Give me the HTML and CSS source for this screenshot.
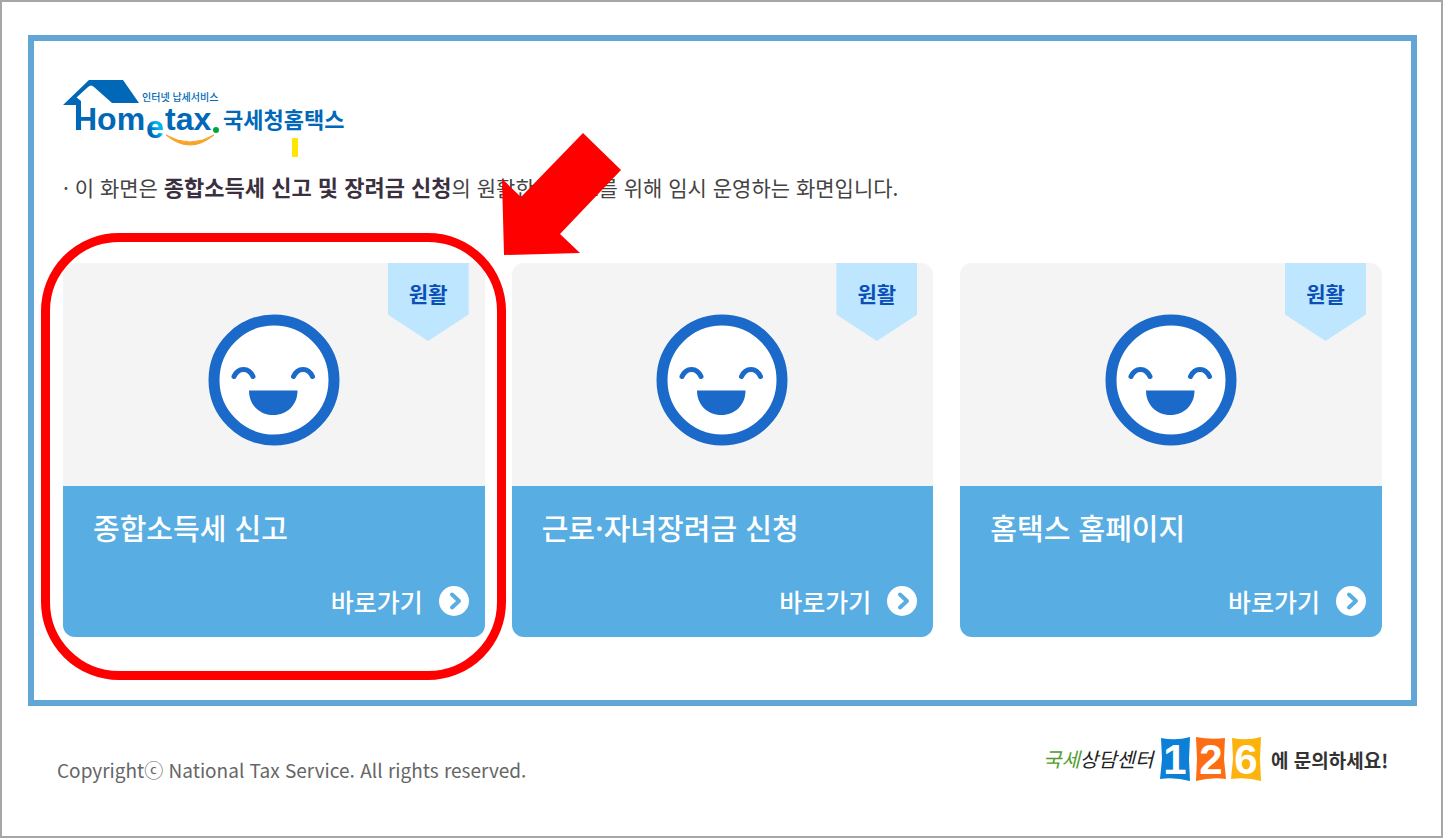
FILE: index.html
```
<!DOCTYPE html>
<html lang="ko">
<head>
    <meta charset="UTF-8">
    <meta name="viewport" content="width=device-width, initial-scale=1.0">
    <title>국세청 홈택스</title>
    <link rel="stylesheet" href="styles.css">
</head>
<body>
    <!-- Icônes partagées -->
    <svg class="defs" width="0" height="0" aria-hidden="true">
        <symbol id="smile" viewBox="0 0 132 132">
            <circle cx="66" cy="66" r="60" fill="#fff" stroke="#1b69c8" stroke-width="11"/>
            <path d="M26 62.500C30 53 41 53 45 62.500M85.500 62.500C89.500 53 100.500 53 104.500 62.500" fill="none" stroke="#1b69c8" stroke-width="5" stroke-linecap="round"/>
            <path d="M41 76.500H89.500C89.500 91 79 101 65.250 101C51.500 101 41 91 41 76.500Z" fill="#1b69c8"/>
        </symbol>
        <symbol id="go" viewBox="0 0 30 30">
            <circle cx="15" cy="15" r="15" fill="#fff"/>
            <path d="M13 8.500L20 15L13 21.500" fill="none" stroke="#58ade3" stroke-width="4" stroke-linecap="round" stroke-linejoin="round"/>
        </symbol>
    </svg>

    <div class="page">
        <main class="panel">
            <h1 class="logo">
                <svg width="284" height="80" viewBox="0 0 284 80" role="img" aria-label="Hometax 국세청홈택스">
                    <defs>
                        <linearGradient id="e-fill" x1="0" y1="1" x2="1" y2="0">
                            <stop offset="0.3" stop-color="#0068b7"/>
                            <stop offset="0.6" stop-color="#00b4f0"/>
                        </linearGradient>
                    </defs>
                    <path d="M0 26L26 1H60L76 24H49L31 8C29 6 27 6 25 8L13 19V26Z" fill="#0068b7"/>
                    <path d="M13 18L18 22V51H13Z" fill="#0068b7"/>
                    <text class="logo-en" x="11" y="51">Hom</text>
                    <text class="logo-e" x="83" y="59">e</text>
                    <text class="logo-en" x="102" y="51">tax</text>
                    <circle cx="153" cy="51" r="3" fill="#00a73c"/>
                    <path d="M103 56Q127 76 151 56Q127 70 103 56Z" fill="#f8a427" stroke="#f8a427" stroke-linejoin="round"/>
                    <text class="logo-sub" x="79" y="22">인터넷 납세서비스</text>
                    <text class="logo-ko" x="160" y="49">국세청홈택스</text>
                    <rect x="229" y="59" width="6" height="19" rx="1" fill="#ffe600"/>
                </svg>
            </h1>

            <p class="notice">· 이 화면은 <strong>종합소득세 신고 및 장려금 신청</strong>의 원활한 서비스를 위해 임시 운영하는 화면입니다.</p>

            <div class="cards">
                <section class="card">
                    <div class="card-top">
                        <svg class="face" aria-hidden="true"><use href="#smile"/></svg>
                        <span class="badge">원활</span>
                    </div>
                    <div class="card-body">
                        <h2>종합소득세 신고</h2>
                        <a href="#" class="go">바로가기 <svg class="go-icon" aria-hidden="true"><use href="#go"/></svg></a>
                    </div>
                    <!-- Repère rouge -->
                    <div class="marker"></div>
                    <svg class="arrow" width="120" height="124" viewBox="0 0 120 124" aria-hidden="true">
                        <path d="M81 0L119 37L58 101L78 120L2 122L0 46L19 64Z" fill="#f00"/>
                    </svg>
                </section>

                <section class="card">
                    <div class="card-top">
                        <svg class="face" aria-hidden="true"><use href="#smile"/></svg>
                        <span class="badge">원활</span>
                    </div>
                    <div class="card-body">
                        <h2>근로·자녀장려금 신청</h2>
                        <a href="#" class="go">바로가기 <svg class="go-icon" aria-hidden="true"><use href="#go"/></svg></a>
                    </div>
                </section>

                <section class="card">
                    <div class="card-top">
                        <svg class="face" aria-hidden="true"><use href="#smile"/></svg>
                        <span class="badge">원활</span>
                    </div>
                    <div class="card-body">
                        <h2>홈택스 홈페이지</h2>
                        <a href="#" class="go">바로가기 <svg class="go-icon" aria-hidden="true"><use href="#go"/></svg></a>
                    </div>
                </section>
            </div>
        </main>

        <footer class="footer">
            <p class="copyright">Copyrightⓒ National Tax Service. All rights reserved.</p>
            <svg width="350" height="50" viewBox="0 0 350 50" role="img" aria-label="국세상담센터 126에 문의하세요!">
                <text class="call-name" x="0" y="32"><tspan fill="#4f9e2f">국세</tspan>상담센터</text>
                <path d="M118 3Q133 6 147 2L146 24L147 46Q132 42 117 44L119 24Z" fill="#0b80d6"/>
                <path d="M153 2Q168 5 182 3L181 24L183 44Q168 42 153 46L154 24Z" fill="#fd6d13"/>
                <path d="M189 3Q204 6 218 2L217 24L218 46Q204 42 188 44L190 24Z" fill="#fdb30d"/>
                <text class="call-num" x="132" y="39">1</text>
                <text class="call-num" x="168" y="39">2</text>
                <text class="call-num" x="203" y="39">6</text>
                <text class="call-text" x="228" y="33">에 문의하세요!</text>
            </svg>
        </footer>
    </div>
</body>
</html>
```

FILE: styles.css
```
* {
    box-sizing: border-box;
}

body {
    margin: 0;
    font-family: "Noto Sans CJK KR", sans-serif;
    color: #444;
    background-color: #fff;
}

h1, h2, p {
    margin: 0;
}

.defs {
    position: absolute;
}

.page {
    min-height: 100vh;
    padding: 33px 24px 0 26px;
    border: 2px solid #a6a6a6;
}

.panel {
    padding: 38px 29px 63px;
    border: 6px solid #62a6d6;
}

/* Logo */
.logo svg {
    display: block;
}

.logo-en {
    font: bold 32px "Liberation Sans", sans-serif;
    fill: #0068b7;
}

.logo-e {
    font: bold 32px "Liberation Sans", sans-serif;
    fill: url(#e-fill);
}

.logo-sub {
    font-size: 10px;
    font-weight: 500;
    fill: #0068b7;
}

.logo-ko {
    font-size: 22px;
    font-weight: bold;
    fill: #0068b7;
}

.notice {
    margin: 14px 0 62px;
    font-size: 21px;
    line-height: 28px;
}

.notice strong {
    color: #3a3040;
    font-size: 22px;
    line-height: 1;
}

/* Cartes */
.cards {
    display: grid;
    grid-template-columns: repeat(3, 1fr);
    gap: 27px;
}

.card {
    position: relative;
}

.card-top {
    display: flex;
    justify-content: center;
    padding: 51px 0 40px;
    background-color: #f4f4f4;
    border-radius: 12px 12px 0 0;
}

.face {
    width: 132px;
    height: 132px;
}

.badge {
    position: absolute;
    top: 0;
    right: 16px;
    width: 81px;
    height: 78px;
    padding-top: 16px;
    background-color: #bfe6ff;
    color: #0a50b8;
    font-size: 21px;
    font-weight: bold;
    line-height: 28px;
    text-align: center;
    clip-path: polygon(0 0, 100% 0, 100% 66%, 50% 100%, 0 66%);
}

.card-body {
    display: flex;
    flex-direction: column;
    gap: 42px;
    padding: 24px 16px 21px 30px;
    background-color: #58ade3;
    border-radius: 0 0 12px 12px;
    color: #fff;
}

.card-body h2 {
    font-size: 29px;
    font-weight: 500;
    line-height: 34px;
}

.go {
    display: flex;
    align-items: center;
    align-self: flex-end;
    gap: 16px;
    color: #fff;
    font-size: 25px;
    font-weight: 500;
    line-height: 30px;
    text-decoration: none;
}

.go:hover {
    text-decoration: underline;
}

.go-icon {
    width: 30px;
    height: 30px;
}

.marker {
    position: absolute;
    top: -30px;
    right: -21px;
    bottom: -43px;
    left: -22px;
    border: 9px solid #f00;
    border-radius: 78px;
    pointer-events: none;
}

.arrow {
    position: absolute;
    top: -130px;
    left: 439px;
    pointer-events: none;
}

/* Pied de page */
.footer {
    display: flex;
    justify-content: space-between;
    align-items: center;
    padding: 29px 24px 0 29px;
}

.copyright {
    padding-top: 20px;
    color: #666;
    font-size: 19px;
    line-height: 28px;
}

.call-name {
    font-size: 20px;
    font-style: italic;
    fill: #222;
}

.call-num {
    font: bold 42px "Liberation Sans", sans-serif;
    fill: #fff;
    text-anchor: middle;
}

.call-text {
    font-size: 19px;
    font-weight: bold;
    fill: #333;
}
```
